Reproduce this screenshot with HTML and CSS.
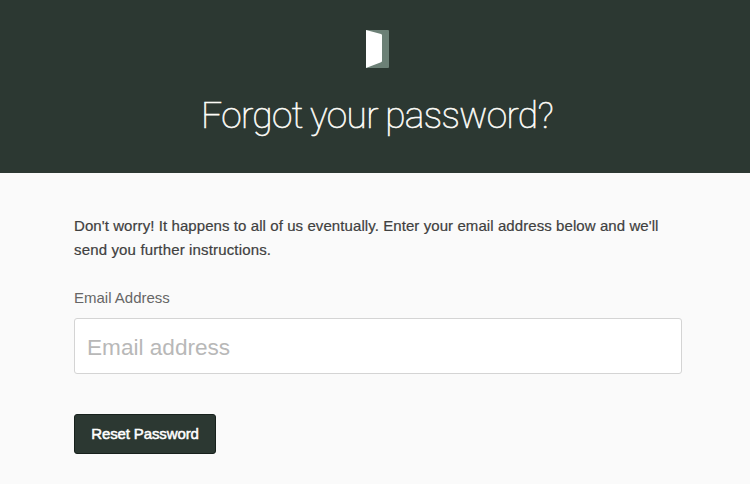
FILE: index.html
```html
<!DOCTYPE html>
<html lang="en">
<head>
<meta charset="utf-8">
<title>Forgot your password?</title>
<link rel="stylesheet" href="styles.css">
</head>
<body>
<header class="hero">
<svg class="logo" width="24" height="40" viewBox="0 0 24 40" aria-hidden="true"><rect fill="#6c8076" y="1" width="23" height="38" rx="1"/><path fill="#fff" d="M0 1l15 4q1 .3 1 1.300v25.700q0 1-1 1.300L0 39z"/></svg>
<h1 class="title">Forgot your password?</h1>
</header>
<main class="content">
<p class="intro"><span class="line line-one">Don't worry! It happens to all of us eventually. Enter your email address below and we'll</span> <span class="line line-two">send you further instructions.</span></p>
<form class="form">
<label class="label" for="email">Email Address</label>
<input class="field" id="email" type="email" placeholder="Email address">
<button class="button" type="button">Reset Password</button>
</form>
</main>
</body>
</html>
```
FILE: styles.css
```css
* { box-sizing: border-box; }
body { margin: 0; min-height: 484px; background: #fafafa; color: #404040; font-family: "Liberation Sans", sans-serif; }
.hero { height: 173px; padding-top: 29px; background: #2c3832; display: flex; flex-direction: column; align-items: center; }
.logo { display: block; margin-left: 5px; }
.title { margin: 22px 0 0 4px; color: #fdfcf8; font: 100 37px/50px Roboto, sans-serif; letter-spacing: -.62px; word-spacing: -1px; -webkit-text-stroke: .6px #fdfcf8; white-space: nowrap; }
.content { padding: 41px 68px 0 74px; }
.intro { margin: 0; font-size: 15px; line-height: 24px; -webkit-text-stroke: .2px #404040; }
.line { display: block; white-space: nowrap; }
.line-one { letter-spacing: .08px; }
.line-two { letter-spacing: .15px; }
.form { display: flex; flex-direction: column; align-items: flex-start; margin-top: 24px; }
.label { color: #666; font-size: 15px; line-height: 24px; }
.field { width: 608px; height: 56px; margin-top: 8px; padding: 3px 12px 0; border: 1px solid #d4d4d4; border-radius: 3px; background: #fff; font: 22.6px "Liberation Sans", sans-serif; outline: 0; }
.field::placeholder { color: #b8b8b8; opacity: 1; }
.button { width: 142px; height: 40px; margin-top: 40px; padding: 0 0 1px; border: 1px solid #17211c; border-radius: 3px; background: #2c3832; color: #fff; font: 15px "Liberation Sans", sans-serif; letter-spacing: -.12px; -webkit-text-stroke: .5px #fff; }
```
